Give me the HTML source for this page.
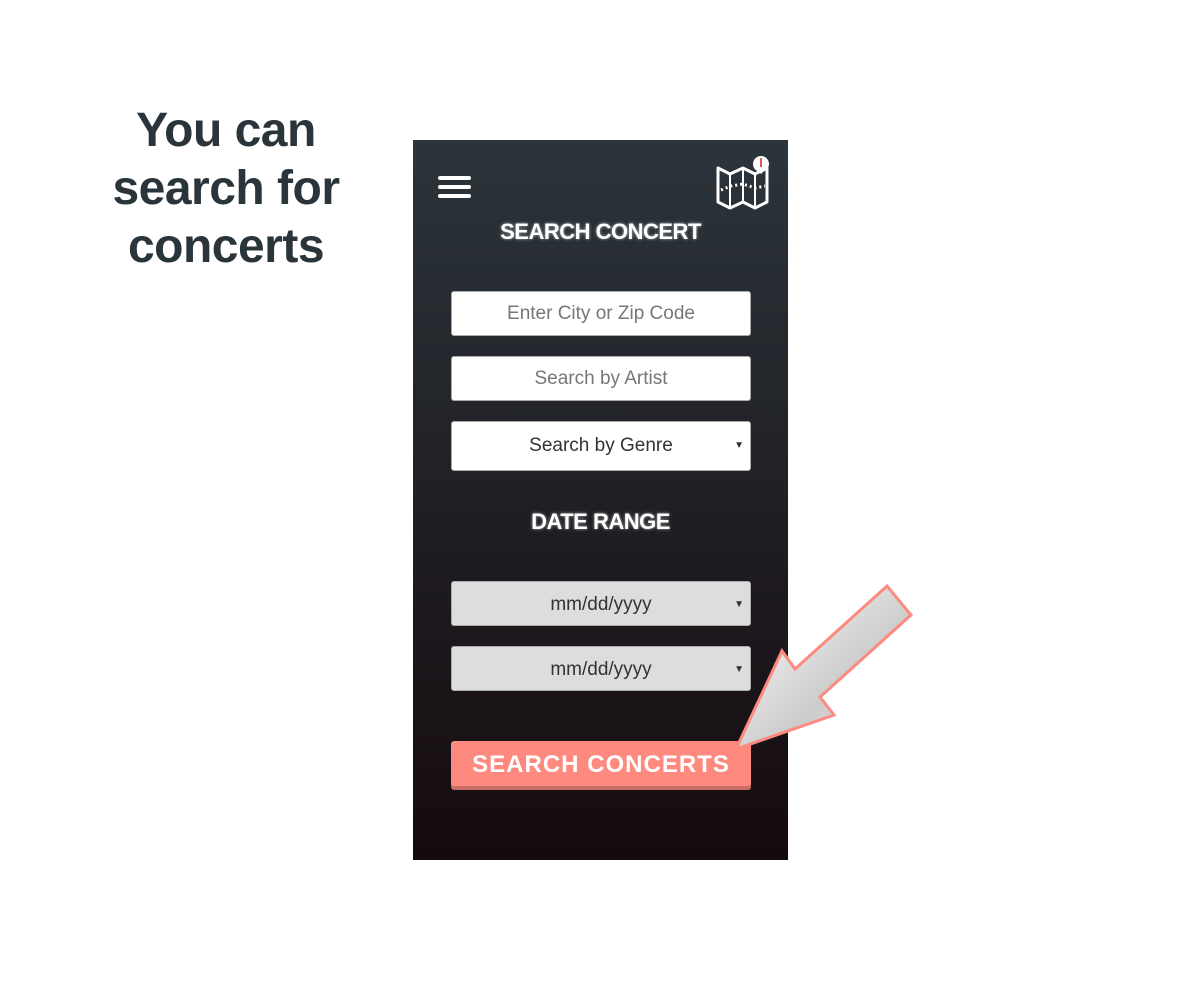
<!DOCTYPE html>
<html><head><style>
body{margin:0;width:1200px;height:1000px;background:#fff;position:relative;font-family:"Liberation Sans",sans-serif;overflow:hidden}
.cap{position:absolute;left:80px;top:102px;width:292px;text-align:center;font-weight:bold;font-size:48px;line-height:58px;color:#2a343b;letter-spacing:-0.5px}
.ph{position:absolute;left:413px;top:140px;width:375px;height:720px;background:linear-gradient(#2b353b,#150a0e)}
.ham{position:absolute;left:25px;width:33px;height:4px;background:#fff;border-radius:2px}
.h{position:absolute;left:0;width:375px;text-align:center;color:#fff;font-weight:bold;font-size:22px;letter-spacing:-0.5px;text-shadow:0 0 3px rgba(255,255,255,.6)}
.in{position:absolute;left:38px;width:300px;background:#fff;border:1px solid #aaa;border-radius:3px;text-align:center;font-size:19px;color:#777;box-sizing:border-box}
.sel{color:#333}
.dt{background:#ddd;color:#333}
.car{position:absolute;right:6px;font-size:10px;color:#333}
.btn{position:absolute;left:38px;top:601px;width:300px;height:45px;background:#fe8a7f;border-radius:3px;box-shadow:0 4px 0 #c86c64;color:#fff;font-weight:bold;font-size:24px;text-align:center;line-height:47px;letter-spacing:1px}
</style></head><body>
<div class="cap">You can search for concerts</div>
<div class="ph">
<div class="ham" style="top:36px"></div><div class="ham" style="top:45px"></div><div class="ham" style="top:54px"></div>
<svg style="position:absolute;left:300px;top:14px" width="60" height="56" viewBox="0 0 60 56"><g fill="none" stroke="#fff" stroke-width="3" stroke-linejoin="round"><path d="M5 14 L17 20 L30 14 L42 20 L54 14 L54 48 L42 54 L30 48 L17 54 L5 48 Z"/><path d="M17 20V54M30 14V48M42 20V54" stroke-width="2"/><path d="M8 36 L18 32 L30 30 L42 34 L52 32" stroke-dasharray="2 3"/></g><circle cx="48" cy="10" r="8" fill="#fff"/><path d="M48 20 L43 15 L53 15Z" fill="#fff"/><rect x="47" y="4" width="2" height="9" fill="#e5584f"/></svg>
<div class="h" style="top:79px">SEARCH CONCERT</div>
<div class="in" style="top:151px;height:45px;line-height:43px">Enter City or Zip Code</div>
<div class="in" style="top:216px;height:45px;line-height:43px">Search by Artist</div>
<div class="in sel" style="top:281px;height:50px;line-height:48px">Search by Genre<span class="car">▼</span></div>
<div class="h" style="top:369px">DATE RANGE</div>
<div class="in dt" style="top:441px;height:45px;line-height:45px">mm/dd/yyyy<span class="car">▼</span></div>
<div class="in dt" style="top:506px;height:45px;line-height:45px">mm/dd/yyyy<span class="car">▼</span></div>
<div class="btn">SEARCH CONCERTS</div>
</div>
<svg style="position:absolute;left:0;top:0" width="1200" height="1000"><defs><linearGradient id="g" x1="0" y1="0" x2="1" y2="1"><stop offset="0" stop-color="#fff"/><stop offset=".6" stop-color="#ccc"/><stop offset="1" stop-color="#eee"/></linearGradient></defs><path d="M736 749 L782 651 L795 669 L887 586 L911 615 L820 697 L834 715 Z" fill="url(#g)" stroke="#fe8a7f" stroke-width="3" stroke-linejoin="miter"/></svg>
</body></html>
